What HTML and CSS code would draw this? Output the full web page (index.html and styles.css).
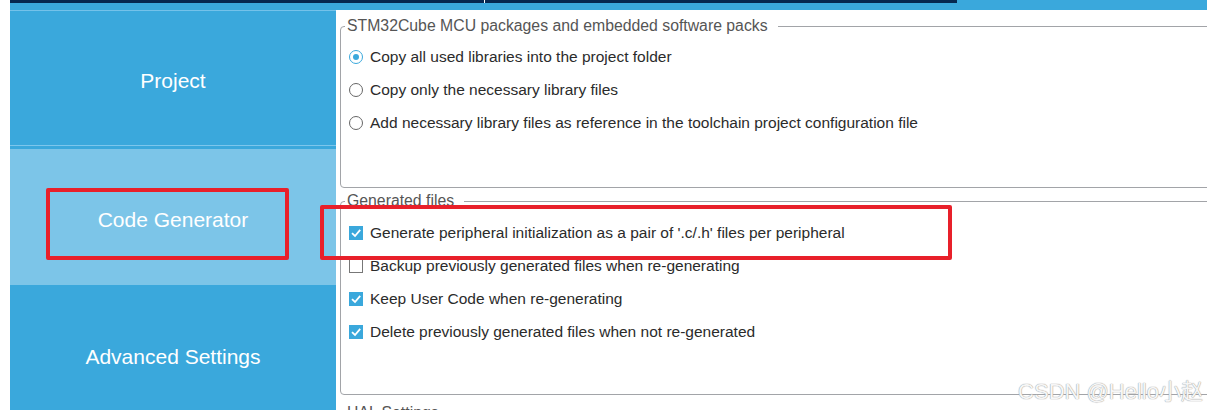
FILE: index.html
```html
<!DOCTYPE html>
<html lang="en">
<head>
    <meta charset="UTF-8">
    <title>Project Manager - Code Generator</title>
    <link rel="stylesheet" href="styles.css">
</head>
<body>
    <div class="page">
        <!-- Top tab strip -->
        <div class="topbar">
            <div class="tabs">
                <div class="tab"></div>
                <div class="tab tab-second"></div>
            </div>
        </div>

        <div class="main">
            <!-- Left navigation -->
            <div class="nav">
                <div class="nav-item nav-project">Project</div>
                <div class="nav-item nav-active">Code Generator</div>
                <div class="nav-item nav-advanced">Advanced Settings</div>
            </div>

            <!-- Settings panel -->
            <div class="content">
                <fieldset class="group group-packs">
                    <legend>STM32Cube MCU packages and embedded software packs</legend>
                    <div class="option"><span class="radio checked"></span>Copy all used libraries into the project folder</div>
                    <div class="option"><span class="radio"></span>Copy only the necessary library files</div>
                    <div class="option"><span class="radio"></span>Add necessary library files as reference in the toolchain project configuration file</div>
                </fieldset>

                <fieldset class="group group-files">
                    <legend>Generated files</legend>
                    <div class="option"><span class="check checked"><svg viewBox="0 0 14 14"><polyline points="3,7.2 6,10 11.2,3.8"/></svg></span>Generate peripheral initialization as a pair of '.c/.h' files per peripheral</div>
                    <div class="option"><span class="check"></span>Backup previously generated files when re-generating</div>
                    <div class="option"><span class="check checked"><svg viewBox="0 0 14 14"><polyline points="3,7.2 6,10 11.2,3.8"/></svg></span>Keep User Code when re-generating</div>
                    <div class="option"><span class="check checked"><svg viewBox="0 0 14 14"><polyline points="3,7.2 6,10 11.2,3.8"/></svg></span>Delete previously generated files when not re-generated</div>
                </fieldset>

                <fieldset class="group group-hal">
                    <legend>HAL Settings</legend>
                </fieldset>
            </div>
        </div>
    </div>

    <!-- Annotation marks -->
    <div class="mark mark-nav"></div>
    <div class="mark mark-option"></div>

    <div class="watermark">CSDN @Hello小赵</div>
</body>
</html>
```

FILE: styles.css
```css
body {
    margin: 0;
    height: 410px;
    overflow: hidden;
    background: #fff;
    font-family: "Liberation Sans", Arial, "Noto Sans CJK SC", sans-serif;
    position: relative;
}
.page {
    margin-left: 10px;
    height: 410px;
    display: flex;
    flex-direction: column;
}
.topbar {
    height: 10px;
    flex-shrink: 0;
    background: #3aa8dc;
}
.tabs {
    display: flex;
    height: 3px;
}
.tab {
    width: 474px;
    background: #062850;
}
.tab-second {
    width: 472px;
    border-left: 1px solid #fff;
}
.main {
    display: flex;
    flex: 1;
    min-height: 0;
}
.nav {
    width: 326px;
    flex-shrink: 0;
    background: #3aa8dc;
    border-top: 1px solid #74c2ea;
    display: flex;
    flex-direction: column;
}
.nav-item {
    box-sizing: border-box;
    flex-shrink: 0;
    display: flex;
    align-items: center;
    justify-content: center;
    padding-top: 6px;
    color: #fff;
    font-size: 21px;
}
.nav-project {
    height: 135px;
    border-bottom: 1px solid #7cc6ec;
    margin-bottom: 3px;
}
.nav-active {
    height: 136px;
    background: #7cc5e8;
}
.nav-advanced {
    height: 138px;
}
.content {
    flex: 1;
    padding: 7px 0 0 4px;
    overflow: hidden;
}
.group {
    margin: 0 -30px 0 0;
    padding: 0 0 0 4px;
    border: 1px solid #a2a4a8;
    border-radius: 4px;
}
.group legend {
    padding: 0 10px 0 2px;
    font-size: 15.8px;
    line-height: 18px;
    color: #555;
}
.group-packs {
    padding-top: 5px;
    padding-bottom: 48px;
}
.group-files {
    margin-top: 4px;
    padding-top: 6px;
    padding-bottom: 46px;
}
.group-hal {
    margin-top: 9px;
    height: 40px;
}
.option {
    display: flex;
    align-items: center;
    height: 33px;
    margin-left: 4px;
    font-size: 15.5px;
    color: #2b2b2b;
}
.radio {
    box-sizing: border-box;
    width: 14px;
    height: 14px;
    margin-right: 7px;
    border: 1.5px solid #666;
    border-radius: 50%;
    display: flex;
    align-items: center;
    justify-content: center;
}
.radio.checked {
    border-color: #3aa8dc;
}
.radio.checked::after {
    content: "";
    width: 6px;
    height: 6px;
    border-radius: 50%;
    background: #3aa8dc;
}
.check {
    box-sizing: border-box;
    width: 14px;
    height: 14px;
    margin-right: 7px;
    border: 1px solid #777;
    background: #fff;
}
.check.checked {
    border: none;
    background: #3aa8dc;
}
.check svg {
    display: block;
    width: 14px;
    height: 14px;
    fill: none;
    stroke: #fff;
    stroke-width: 1.8;
}
.mark {
    position: absolute;
    box-sizing: border-box;
    border: 4px solid #e8202a;
    border-radius: 2px;
}
.mark-nav {
    left: 46px;
    top: 188px;
    width: 243px;
    height: 72px;
}
.mark-option {
    left: 320px;
    top: 205px;
    width: 632px;
    height: 55px;
}
.watermark {
    position: absolute;
    right: 4px;
    top: 373px;
    font-size: 22px;
    color: #f6f6f6;
    text-shadow: 0 0 1px #999, 0 0 1px #aaa;
}
```
